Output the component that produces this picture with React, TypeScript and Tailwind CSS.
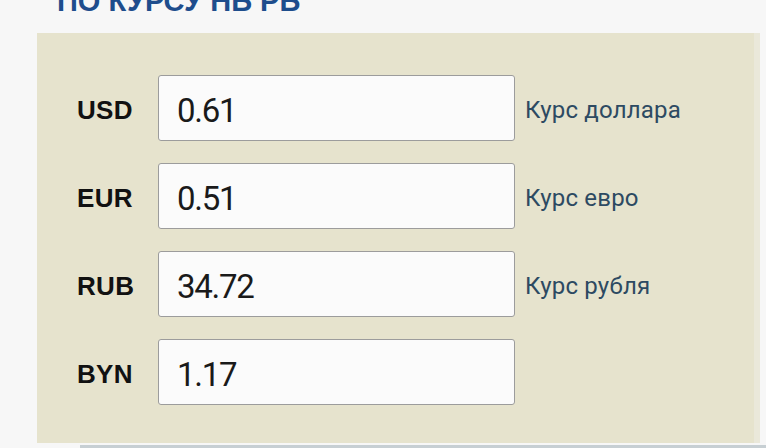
const rates = [
  { code: "USD", value: "0.61", note: "Курс доллара" },
  { code: "EUR", value: "0.51", note: "Курс евро" },
  { code: "RUB", value: "34.72", note: "Курс рубля" },
  { code: "BYN", value: "1.17", note: "" },
];

export default function App() {
  return (
    <div className="w-[766px] h-[448px] overflow-hidden bg-[#f7f7f7]">
      {/* Section heading, partly scrolled out of view */}
      <h2
        className="ml-[57px] mt-[-13px] text-[29px] leading-[29px] font-bold text-[#1e4d8c] whitespace-nowrap"
        style={{ fontFamily: "'Liberation Sans', Arial, sans-serif" }}
      >
        ПО КУРСУ НБ РБ
      </h2>

      {/* Converter panel */}
      <div className="ml-[37px] mt-[17px] w-[723px] h-[410px] bg-[#e6e3cd] border-r-[6px] border-[#eae8da] pl-[40px] pt-[42px] flex flex-col gap-[22px]">
        {rates.map((r) => (
          <div key={r.code} className="flex items-center h-[66px]">
            <span
              className="w-[81px] mt-[4px] text-[26px] tracking-[0.3px] font-bold text-[#111]"
              style={{ fontFamily: "'Liberation Sans', Arial, sans-serif" }}
            >
              {r.code}
            </span>
            <div
              className="w-[357px] h-[66px] flex items-center pl-[18px] pt-[5px] bg-[#fbfbfb] border border-[#9c9c9c] rounded-[3px] text-[33px] tracking-[-1.3px] text-[#1a1a1a]"
              style={{ fontFamily: "Roboto, sans-serif" }}
            >
              {r.value}
            </div>
            {r.note && (
              <span
                className="ml-[10px] mt-[4px] text-[24px] tracking-[0.2px] text-[#2d4a62]"
                style={{ fontFamily: "Roboto, sans-serif" }}
              >
                {r.note}
              </span>
            )}
          </div>
        ))}
      </div>

      <div className="ml-[80px] mt-[2px] h-[3px] bg-[#c7cfd3]" />
    </div>
  );
}
